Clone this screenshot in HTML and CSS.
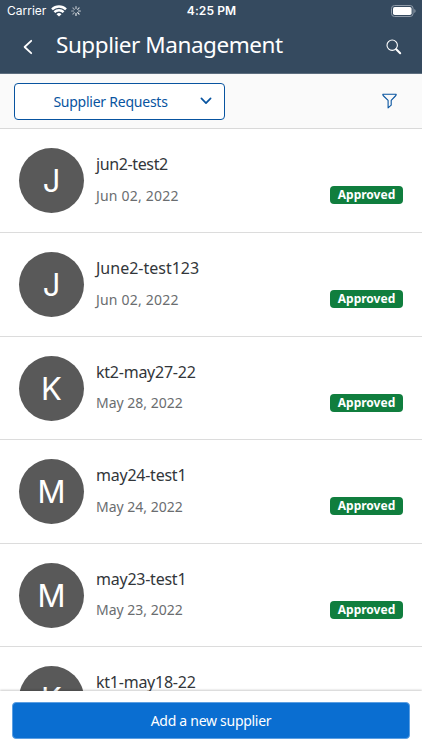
FILE: index.html
```html
<!DOCTYPE html>
<html lang="en">
<head>
<meta charset="utf-8">
<title>Supplier Management</title>
<link rel="stylesheet" href="styles.css">
</head>
<body>
<div class="app">
  <header class="header">
    <div class="status">
      <div class="status-left">
        <span class="carrier">Carrier</span>
        <svg class="wifi" width="16" height="12" viewBox="0 0 16 12" fill="none" stroke="#fff" stroke-width="2.4"><path d="M1 4.3a10 10 0 0 1 14 0M3.4 7.2a6.5 6.5 0 0 1 9.2 0"/><path d="M8 11.6 5.5 9.3a3.5 3.5 0 0 1 5 0z" fill="#fff" stroke="none"/></svg>
        <svg class="spinner" width="10" height="10" viewBox="0 0 10 10" stroke="#fff" stroke-width="1.1" stroke-linecap="round"><path d="M5 .6v2M8.1 1.9 6.7 3.3M9.4 5h-2" opacity=".75"/><path d="M8.1 8.1 6.7 6.7M5 9.4v-2" opacity=".95"/><path d="M1.9 8.1l1.4-1.4M.6 5h2M1.9 1.9l1.4 1.4" opacity=".55"/></svg>
      </div>
      <span class="clock">4:25 PM</span>
      <svg class="battery" width="25" height="12" viewBox="0 0 25 12"><rect x=".5" y=".5" width="21.6" height="11" rx="3" fill="none" stroke="#8f9ba9"/><rect x="2" y="2" width="18.6" height="8" rx="1.7" fill="#fff"/><path d="M23.3 4v4q1.3-.6 1.3-2t-1.3-2z" fill="#8f9ba9"/></svg>
    </div>
    <div class="nav">
      <svg class="back" width="10" height="16" viewBox="0 0 10 16" fill="none" stroke="#fff" stroke-width="1.8" stroke-linecap="round" stroke-linejoin="round"><path d="M8.2 1.8 1.6 8l6.6 6.2"/></svg>
      <h1 class="title">Supplier Management</h1>
      <svg class="search" width="16" height="16" viewBox="0 0 16 16" fill="none" stroke="#fff"><circle cx="6.2" cy="6.2" r="5.2" stroke-width="1.1"/><path d="m10.2 10.2 4 4" stroke-width="2" stroke-linecap="round"/></svg>
    </div>
  </header>
  <div class="toolbar">
    <button class="select"><span class="select-label">Supplier Requests</span>
      <svg class="chevron" width="12" height="8" viewBox="0 0 12 8" fill="none" stroke="#0854a0" stroke-width="1.7" stroke-linecap="round" stroke-linejoin="round"><path d="M1.4 1.4 6 6.1l4.6-4.7"/></svg>
    </button>
    <svg class="filter" width="15" height="16" viewBox="0 0 15 16" fill="none" stroke="#0854a0" stroke-width="1.1" stroke-linejoin="round"><path d="M.8 1.2h13.4q0 1-.8 1.8L9.2 7.4v4.8l-3.1 2.6V7.4L1.6 3Q.8 2.2.8 1.2z"/></svg>
  </div>
  <main class="list">
    <article class="row"><div class="avatar">J</div><div class="info"><div class="name tight">jun2-test2</div><div class="date wide">Jun 02, 2022</div></div><span class="badge">Approved</span></article>
    <article class="row"><div class="avatar">J</div><div class="info"><div class="name loose">June2-test123</div><div class="date wide">Jun 02, 2022</div></div><span class="badge">Approved</span></article>
    <article class="row"><div class="avatar">K</div><div class="info"><div class="name">kt2-may27-22</div><div class="date">May 28, 2022</div></div><span class="badge">Approved</span></article>
    <article class="row"><div class="avatar">M</div><div class="info"><div class="name">may24-test1</div><div class="date">May 24, 2022</div></div><span class="badge">Approved</span></article>
    <article class="row"><div class="avatar">M</div><div class="info"><div class="name">may23-test1</div><div class="date">May 23, 2022</div></div><span class="badge">Approved</span></article>
    <article class="row"><div class="avatar">K</div><div class="info"><div class="name">kt1-may18-22</div></div></article>
  </main>
  <footer class="footer"><button class="add">Add a new supplier</button></footer>
</div>
</body>
</html>
```
FILE: styles.css
```css
* { box-sizing: border-box; }
body { margin: 0; font-family: "Noto Sans", sans-serif; color: #32363a; }
svg { display: block; flex: none; }
button { font: inherit; margin: 0; padding: 0; }
.app { width: 422px; height: 750px; display: flex; flex-direction: column; overflow: hidden; background: #fff; }

.header { height: 74px; flex: none; background: #354a5f; border-bottom: 1px solid #5d6e7f; color: #fff; }
.status { height: 22px; display: grid; grid-template-columns: 1fr auto 1fr; align-items: center; padding: 0 6px 0 7px; font-family: Inter, sans-serif; font-size: 12px; line-height: 22px; }
.status-left { display: flex; align-items: center; }
.carrier { width: 44px; }
.wifi, .spinner { margin-top: -1px; }
.spinner { margin-left: 4px; }
.clock { font-weight: 600; letter-spacing: .1px; }
.battery { justify-self: end; margin-top: -1px; }
.nav { height: 50px; display: flex; align-items: center; padding: 0 20px 0 23px; }
.title { margin: -4px 0 0 23px; font-size: 22.5px; font-weight: 400; line-height: 30px; letter-spacing: -.45px; flex: 1; white-space: nowrap; }

.toolbar { height: 55.4px; flex: none; display: flex; align-items: center; justify-content: space-between; padding: 0 25px 0 14px; background: #fafafa; border-bottom: 1px solid #d9d9d9; }
.select { width: 211px; height: 37px; display: flex; align-items: center; border: 1px solid #0854a0; border-radius: 4px; background: #fff; color: #0854a0; font-size: 14px; }
.select-label { flex: 1; padding-left: 6px; text-align: center; letter-spacing: -.24px; white-space: nowrap; }
.chevron { margin-right: 12px; }

.list { flex: 1; min-height: 0; overflow: hidden; }
.row { height: 103.6px; display: flex; padding: 19px; border-bottom: 1px solid #dcdcdc; }
.avatar { width: 65px; height: 65px; flex: none; border-radius: 50%; background: #595959; color: #fff; font-family: Inter, sans-serif; font-size: 31px; line-height: 66px; text-align: center; }
.info { flex: 1; padding: 4px 0 0 12px; white-space: nowrap; }
.name { font-size: 16px; line-height: 24px; letter-spacing: -.24px; }
.name.tight { letter-spacing: -.38px; }
.name.loose { letter-spacing: 0; }
.date { margin-top: 8.6px; font-size: 14px; line-height: 22px; color: #6a6d70; }
.date.wide { letter-spacing: .2px; }
.badge { width: 73px; height: 18px; margin-top: 38px; border-radius: 4px; background: #107e3e; color: #fff; font-size: 12px; font-weight: 700; line-height: 18px; text-align: center; }

.footer { height: 59px; flex: none; position: relative; padding: 11px 12px 0; background: #fff; box-shadow: 0 -1px 2px rgba(0, 0, 0, .2); }
.add { width: 398px; height: 37px; border: 1px solid #5c9fe2; border-radius: 4px; background: #0a6ed1; color: #fff; font-size: 14px; letter-spacing: -.28px; }
```
